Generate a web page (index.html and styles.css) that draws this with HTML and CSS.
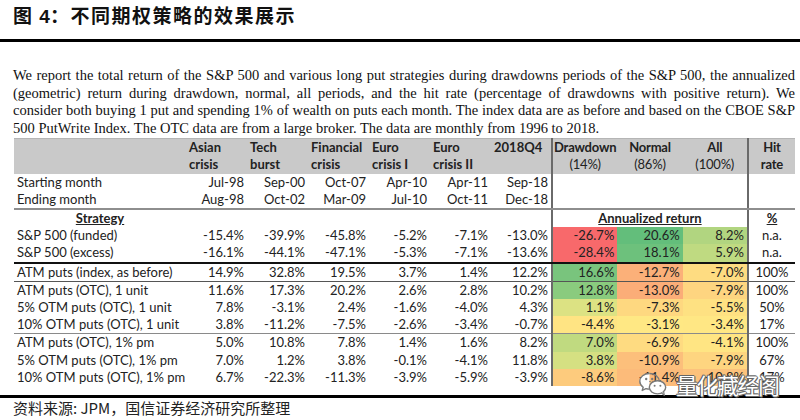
FILE: index.html
```html
<!DOCTYPE html>
<html lang="zh">
<head>
<meta charset="utf-8">
<title>图 4</title>
<link rel="stylesheet" href="styles.css">
</head>
<body>
<h1 class="title">图 <span class="num">4</span>：不同期权策略的效果展示</h1>
<p class="intro">
  <span class="line">We report the total return of the S&amp;P 500 and various long put strategies during drawdowns periods of the S&amp;P 500, the annualized</span>
  <span class="line">(geometric) return during drawdown, normal, all periods, and the hit rate (percentage of drawdowns with positive return). We</span>
  <span class="line">consider both buying 1 put and spending 1% of wealth on puts each month. The index data are as before and based on the CBOE S&amp;P</span>
  <span class="line last">500 PutWrite Index. The OTC data are from a large broker. The data are monthly from 1996 to 2018.</span>
</p>
<table class="data">
  <colgroup>
    <col class="c-label"><col class="c-num"><col class="c-num"><col class="c-num"><col class="c-num"><col class="c-num"><col class="c-num"><col class="c-heat"><col class="c-heat"><col class="c-heat"><col class="c-hit">
  </colgroup>
  <thead>
    <tr class="head">
      <th></th>
      <th>Asian<br>crisis</th>
      <th>Tech<br>burst</th>
      <th>Financial<br>crisis</th>
      <th>Euro<br>crisis I</th>
      <th>Euro<br>crisis II</th>
      <th>2018Q4<br>&nbsp;</th>
      <th class="sep ctr">Drawdown<br><span class="reg">(14%)</span></th>
      <th class="ctr">Normal<br><span class="reg">(86%)</span></th>
      <th class="ctr">All<br><span class="reg">(100%)</span></th>
      <th class="sep ctr">Hit<br>rate</th>
    </tr>
  </thead>
  <tbody>
    <tr>
      <td>Starting month</td><td>Jul-98</td><td>Sep-00</td><td>Oct-07</td><td>Apr-10</td><td>Apr-11</td><td>Sep-18</td>
      <td class="sep"></td><td></td><td></td><td class="sep"></td>
    </tr>
    <tr class="rule-grey2">
      <td>Ending month</td><td>Aug-98</td><td>Oct-02</td><td>Mar-09</td><td>Jul-10</td><td>Oct-11</td><td>Dec-18</td>
      <td class="sep"></td><td></td><td></td><td class="sep"></td>
    </tr>
    <tr>
      <td class="ctr"><b class="ul">Strategy</b></td><td></td><td></td><td></td><td></td><td></td><td></td>
      <td class="sep ctr" colspan="3"><b class="ul">Annualized return</b></td><td class="sep ctr"><b class="ul">%</b></td>
    </tr>
    <tr>
      <td>S&amp;P 500 (funded)</td><td>-15.4%</td><td>-39.9%</td><td>-45.8%</td><td>-5.2%</td><td>-7.1%</td><td>-13.0%</td>
      <td class="sep" style="background:#f8696b">-26.7%</td><td style="background:#63be7b">20.6%</td><td style="background:#b1d580">8.2%</td><td class="sep ctr">n.a.</td>
    </tr>
    <tr class="rule-black">
      <td>S&amp;P 500 (excess)</td><td>-16.1%</td><td>-44.1%</td><td>-47.1%</td><td>-5.3%</td><td>-7.1%</td><td>-13.6%</td>
      <td class="sep" style="background:#f8696b">-28.4%</td><td style="background:#6dc17c">18.1%</td><td style="background:#bfda81">5.9%</td><td class="sep ctr">n.a.</td>
    </tr>
    <tr class="rule-dark">
      <td>ATM puts (index, as before)</td><td>14.9%</td><td>32.8%</td><td>19.5%</td><td>3.7%</td><td>1.4%</td><td>12.2%</td>
      <td class="sep" style="background:#79c47d">16.6%</td><td style="background:#fbb079">-12.7%</td><td style="background:#fedc81">-7.0%</td><td class="sep ctr">100%</td>
    </tr>
    <tr>
      <td>ATM puts (OTC), 1 unit</td><td>11.6%</td><td>17.3%</td><td>20.2%</td><td>2.6%</td><td>2.8%</td><td>10.2%</td>
      <td class="sep" style="background:#8acb7e">12.8%</td><td style="background:#fbad78">-13.0%</td><td style="background:#fed580">-7.9%</td><td class="sep ctr">100%</td>
    </tr>
    <tr>
      <td>5% OTM puts (OTC), 1 unit</td><td>7.8%</td><td>-3.1%</td><td>2.4%</td><td>-1.6%</td><td>-4.0%</td><td>4.3%</td>
      <td class="sep" style="background:#dce283">1.1%</td><td style="background:#fed880">-7.3%</td><td style="background:#fee182">-5.5%</td><td class="sep ctr">50%</td>
    </tr>
    <tr class="rule-grey">
      <td>10% OTM puts (OTC), 1 unit</td><td>3.8%</td><td>-11.2%</td><td>-7.5%</td><td>-2.6%</td><td>-3.4%</td><td>-0.7%</td>
      <td class="sep" style="background:#ffe483">-4.4%</td><td style="background:#ffe884">-3.1%</td><td style="background:#ffe784">-3.4%</td><td class="sep ctr">17%</td>
    </tr>
    <tr>
      <td>ATM puts (OTC), 1% pm</td><td>5.0%</td><td>10.8%</td><td>7.8%</td><td>1.4%</td><td>1.6%</td><td>8.2%</td>
      <td class="sep" style="background:#c0da80">7.0%</td><td style="background:#fedb81">-6.9%</td><td style="background:#ffe583">-4.1%</td><td class="sep ctr">100%</td>
    </tr>
    <tr>
      <td>5% OTM puts (OTC), 1% pm</td><td>7.0%</td><td>1.2%</td><td>3.8%</td><td>-0.1%</td><td>-4.1%</td><td>11.8%</td>
      <td class="sep" style="background:#d5e082">3.8%</td><td style="background:#fcbf7b">-10.9%</td><td style="background:#fed580">-7.9%</td><td class="sep ctr">67%</td>
    </tr>
    <tr>
      <td>10% OTM puts (OTC), 1% pm</td><td>6.7%</td><td>-22.3%</td><td>-11.3%</td><td>-3.9%</td><td>-5.9%</td><td>-3.9%</td>
      <td class="sep" style="background:#fdcb7d">-8.6%</td><td style="background:#fcbb7a">-11.4%</td><td style="background:#fcc27c">-10.8%</td><td class="sep ctr">17%</td>
    </tr>
  </tbody>
</table>
<p class="source">资料来源: JPM，国信证券经济研究所整理</p>
<div class="watermark">
  <svg class="wx" width="30" height="26" viewBox="0 0 30 26" aria-hidden="true">
    <path d="M11.5 2.5C6 2.5 1.8 6 1.8 10.3c0 2.4 1.3 4.5 3.4 6l-1 3.2 3.7-1.9c1.1.3 2.3.5 3.6.5" fill="#fff" stroke="#7a7a7a" stroke-width="1.4" stroke-linejoin="round"/>
    <path d="M11.5 2.5c5.4 0 9.7 3.5 9.7 7.8" fill="none" stroke="#7a7a7a" stroke-width="1.4"/>
    <ellipse cx="19.5" cy="16.3" rx="8.2" ry="6.6" fill="#fff" stroke="#7a7a7a" stroke-width="1.4"/>
    <path d="M23.5 22l2.8 2.4-.6-3.4" fill="#fff" stroke="#7a7a7a" stroke-width="1.2" stroke-linejoin="round"/>
    <circle cx="8.2" cy="8" r="1.2" fill="#7a7a7a"/>
    <circle cx="14.2" cy="8" r="1.2" fill="#7a7a7a"/>
    <circle cx="16.6" cy="14.8" r="1" fill="#7a7a7a"/>
    <circle cx="22.4" cy="14.8" r="1" fill="#7a7a7a"/>
  </svg>
  <span class="wm-text">量化藏经阁</span>
</div>
</body>
</html>
```
FILE: styles.css
```css
* { box-sizing: border-box; }

body {
  margin: 0;
  background: #fff;
  color: #1c1c1c;
  position: relative;
  width: 800px;
  height: 420px;
  overflow: hidden;
}

.title {
  margin: 0;
  height: 42px;
  padding: 2px 0 0 13px;
  border-bottom: 3px solid #000;
  font-family: "Noto Sans CJK SC", sans-serif;
  font-weight: 700;
  font-size: 19px;
  line-height: 26px;
  letter-spacing: 1.5px;
  color: #111;
}

.title .num {
  font-family: "Liberation Sans", Arial, sans-serif;
  letter-spacing: 0;
}

.intro {
  margin: 25px 5px 0 13px;
  font-family: "Liberation Serif", "Times New Roman", serif;
  font-size: 14.5px;
  line-height: 17.5px;
  color: #111;
}

.intro .line {
  display: block;
  text-align: justify;
  text-align-last: justify;
  white-space: nowrap;
}

.intro .line.last {
  text-align-last: left;
}

.data {
  margin: 1px 5px 0 14px;
  width: 781px;
  table-layout: fixed;
  border-collapse: collapse;
  font-family: Lato, "Noto Sans", sans-serif;
  font-size: 13px;
  color: #222;
}

.c-label { width: 172px; }
.c-num { width: 61px; }
.c-heat { width: 65.3px; }
.c-hit { width: 47px; }

.data th,
.data td {
  padding: 0 3px;
  height: 17.2px;
  line-height: 17.2px;
  white-space: nowrap;
}

.data td { text-align: right; }
.data td:first-child { text-align: left; }

.head th {
  background: #c9c9c9;
  text-align: left;
  font-weight: 700;
  line-height: 17px;
  height: 35px;
  vertical-align: top;
  padding-top: 0;
  border-top: 1px solid #b5b5b5;
}

.head th.ctr {
  padding: 0;
  text-align: center;
  letter-spacing: -0.2px;
}

.reg { font-weight: 400; }

.data td.ctr { text-align: center; }

.data .sep { border-left: 2px solid #6a6a6a; }

.ul { text-decoration: underline; font-weight: 700; }

.rule-grey2 td { border-bottom: 2px solid #8e8e8e; }
.rule-black td { border-bottom: 2px solid #111; }
.rule-dark td { border-bottom: 1px solid #555; }
.rule-grey td { border-bottom: 1px solid #8a8a8a; }

.source {
  margin: 9px 0 0 0;
  padding: 0 0 0 13px;
  border-top: 3px solid #000;
  font-family: "Noto Sans CJK SC", sans-serif;
  font-size: 15px;
  line-height: 20px;
  color: #222;
}

.watermark {
  position: absolute;
  left: 638px;
  top: 371px;
  display: flex;
  align-items: center;
  gap: 8px;
}

.wm-text {
  font-family: "Noto Sans CJK SC", sans-serif;
  font-size: 22px;
  line-height: 26px;
  letter-spacing: -1.5px;
  color: #fff;
  text-shadow: 1px 0 0 #666, -1px 0 0 #666, 0 1px 0 #666, 0 -1px 0 #666, 1px 1px 0 #777, -1px -1px 0 #777;
}
```
